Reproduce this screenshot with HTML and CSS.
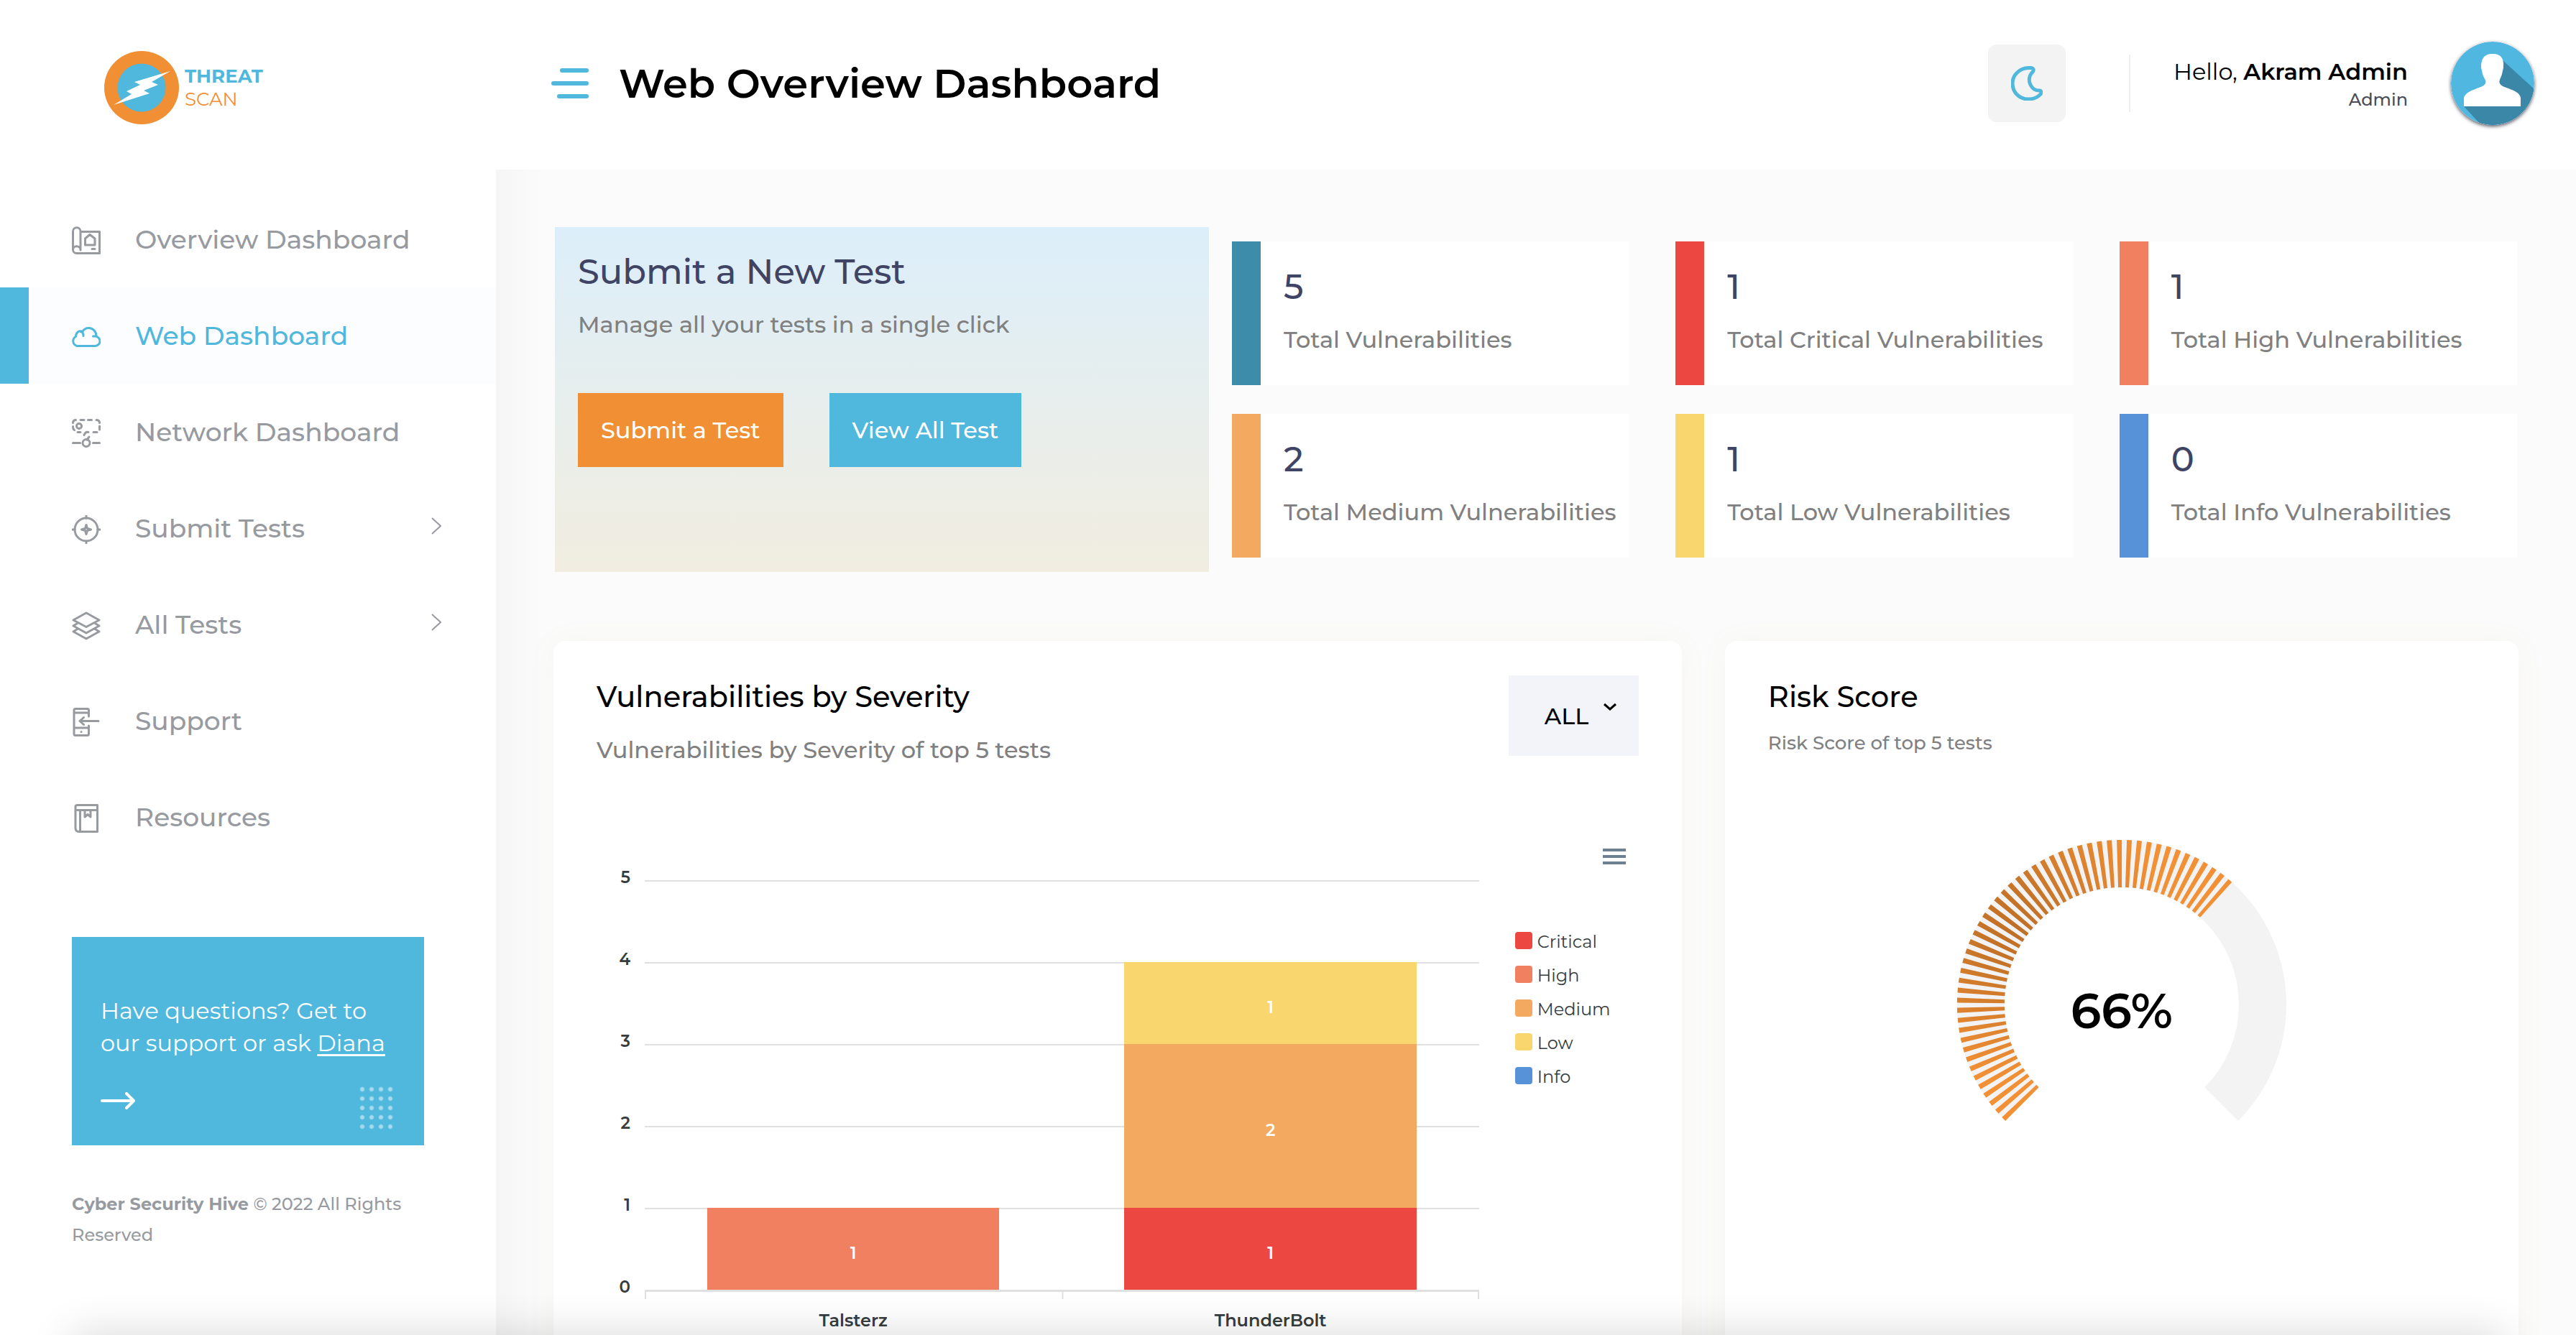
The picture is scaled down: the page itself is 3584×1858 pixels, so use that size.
FILE: index.html
```html
<!DOCTYPE html>
<html lang="en">
<head>
<meta charset="utf-8">
<meta name="viewport" content="width=device-width, initial-scale=1">
<title>Web Overview Dashboard</title>
<link rel="stylesheet" href="styles.css">
</head>
<body>
<div class="app">
  <aside class="sidebar">
    <a class="logo" href="#">
      <svg class="logo-mark" viewBox="0 0 104 102" aria-hidden="true">
        <ellipse cx="52" cy="51" rx="52" ry="51" fill="#f18f34"/>
        <circle cx="52" cy="51" r="33.5" fill="#50b7dd"/>
        <path d="M92 28 42 43l8 4-19 9 7 4-25 15 50-16-8-4 20-8-9-4z" fill="#fff"/>
      </svg>
      <span class="logo-text"><b>THREAT</b><span>SCAN</span></span>
    </a>

    <nav class="nav">
      <a class="nav-item" href="#">
        <svg class="icon" viewBox="0 0 40 40"><path d="M12 7.500H38.500V37.500H6.500a5 5 0 0 1-5-5V7a5 5 0 0 1 10.500 0V33M1.500 32.500c0-6.500 10-6.500 10.500 0M18.500 26V17l6.500-5.500 7 5.500v9zM28 31.500h4"/></svg>
        <span>Overview Dashboard</span>
      </a>
      <a class="nav-item active" href="#" aria-current="page">
        <svg class="icon" viewBox="0 0 40 40"><path d="M8 32.500H32a6.500 6.500 0 0 0 .5-13.500h-3 4.500C34 12 29 7.500 23.500 7.500c-4 0-7 2-8.500 5-5-2-9.500 1-9.500 7C.5 22 0 30 7 32.500M12 12.500c3 .5 4 3 4 6"/></svg>
        <span>Web Dashboard</span>
      </a>
      <a class="nav-item" href="#">
        <svg class="icon" viewBox="0 0 40 40"><path d="M1.500 5.500q0-4 4-4M12 1.500h5M22.500 1.500h5M34 1.500q4.500 0 4.500 4M38.500 10v5M30 18.500h5M1.500 10.500q0 4 2 5M8 18.500h4M23 18.500q-4-1-6 4M24 25l-3 4M1.500 33.500h10M29.500 33.500h9"/><circle cx="10" cy="10" r="3.500"/><circle cx="20" cy="33.500" r="5"/></svg>
        <span>Network Dashboard</span>
      </a>
      <a class="nav-item" href="#">
        <svg class="icon" viewBox="0 0 40 40"><circle cx="20" cy="20" r="16"/><path d="M20 1v3M20 36v3M1 20h3M36 20h3M20 13.500l1.500 5 5 1.500-5 1.500-1.500 5-1.500-5-5-1.500 5-1.500z"/></svg>
        <span>Submit Tests</span>
        <svg class="chevron" viewBox="0 0 14 24"><path d="M1 1l12 11L1 23"/></svg>
      </a>
      <a class="nav-item" href="#">
        <svg class="icon" viewBox="0 0 40 40"><path d="M20 2l18 10-18 9.500L2 12zM7 17l-5 3 18 10 18-10-5-3M7 25l-5 3 18 10 18-10-5-3"/></svg>
        <span>All Tests</span>
        <svg class="chevron" viewBox="0 0 14 24"><path d="M1 1l12 11L1 23"/></svg>
      </a>
      <a class="nav-item" href="#">
        <svg class="icon" viewBox="0 0 40 40"><path d="M23.500 12V3.500q0-2-2-2H5q-2 0-2 2V36.500q0 2 2 2H21.500q2 0 2-2V25M3 7h20M3 28h20M37 18.500H11M16.500 13.500l-5.500 5 5.500 5M13 33.500h.1"/></svg>
        <span>Support</span>
      </a>
      <a class="nav-item" href="#">
        <svg class="icon" viewBox="0 0 40 40"><path d="M7 1.500H35.500V38.500H10q-5 0-5-5V4q0-2.500 2.500-2.500M5 8.500H35M11.500 9V38M18 9v9l4-3.500 4 3.500V9"/></svg>
        <span>Resources</span>
      </a>
    </nav>

    <div class="help">
      <p>Have questions? Get to our support or ask <a href="#">Diana</a></p>
      <div class="help-foot">
        <svg class="arrow" viewBox="0 0 48 24" aria-hidden="true"><path d="M2 12H46M36 2l10 10-10 10"/></svg>
        <span class="dots"></span>
      </div>
    </div>
    <p class="copyright"><strong>Cyber Security Hive</strong> © 2022 All Rights Reserved</p>
  </aside>

  <header class="header">
    <button class="menu-btn" type="button" aria-label="Toggle menu"><i></i><i></i><i></i></button>
    <h1>Web Overview Dashboard</h1>
    <button class="theme-btn" type="button" aria-label="Dark mode">
      <svg viewBox="0 0 44 48"><path d="M28 2.500C31 3 32 5 30.500 7.500 25 13 24 20 27 26c3 6 8 8.500 13 8 2 .5 2.500 2.500 1.500 4.500C37 44 31 46 24 46 11 46 2 36 2 24S12 3 24 2.500z"/></svg>
    </button>
    <div class="user">
      <div class="user-text">
        <span class="hello">Hello, <strong>Akram Admin</strong></span>
        <span class="role">Admin</span>
      </div>
      <svg class="avatar" viewBox="0 0 116 116" aria-label="Profile picture">
        <defs><clipPath id="disc"><circle cx="58" cy="58" r="58"/></clipPath></defs>
        <g clip-path="url(#disc)">
          <path d="M0 0H116V116H0z" fill="#50b7e0"/>
          <path d="M72 26L116 66V116H42L18 90H50V50z" fill="#3b87a8"/>
          <path d="M18 90V78c2-7 11-10 18-13 6-2 11-4 12-7 2-4-3-8-4-13l-2-9c0-11 3-19 16-19s16 8 15 19l-2 9c-1 5-5 9-3 13 1 3 6 5 12 7 7 3 16 6 17 13V90z" fill="#fff"/>
        </g>
      </svg>
    </div>
  </header>

  <main class="main">
    <section class="overview">
      <div class="submit">
        <h2>Submit a New Test</h2>
        <p>Manage all your tests in a single click</p>
        <div class="submit-actions">
          <button class="btn orange" type="button">Submit a Test</button>
          <button class="btn blue" type="button">View All Test</button>
        </div>
      </div>
      <div class="stats">
        <div class="stat total"><b>5</b><span>Total Vulnerabilities</span></div>
        <div class="stat critical"><b>1</b><span>Total Critical Vulnerabilities</span></div>
        <div class="stat high"><b>1</b><span>Total High Vulnerabilities</span></div>
        <div class="stat medium"><b>2</b><span>Total Medium Vulnerabilities</span></div>
        <div class="stat low"><b>1</b><span>Total Low Vulnerabilities</span></div>
        <div class="stat info"><b>0</b><span>Total Info Vulnerabilities</span></div>
      </div>
    </section>

    <section class="panels">
      <article class="card severity">
        <div class="card-head">
          <div>
            <h3>Vulnerabilities by Severity</h3>
            <p class="sub">Vulnerabilities by Severity of top 5 tests</p>
          </div>
          <div class="select">
            <select aria-label="Filter tests"><option>ALL</option></select>
            <svg viewBox="0 0 20 12" aria-hidden="true"><path d="M2 2l8 7 8-7"/></svg>
          </div>
        </div>
        <div class="chart-tools">
          <button class="chart-menu" type="button" aria-label="Chart menu"><i></i><i></i><i></i></button>
        </div>
        <div class="chart">
          <div class="y-axis"><span>5</span><span>4</span><span>3</span><span>2</span><span>1</span><span>0</span></div>
          <div class="plot">
            <div class="bars">
              <div class="bar"><span class="high" style="--n:1">1</span></div>
              <div class="bar"><span class="low" style="--n:1">1</span><span class="medium" style="--n:2">2</span><span class="critical" style="--n:1">1</span></div>
            </div>
            <div class="x-axis"><span>Talsterz</span><span>ThunderBolt</span></div>
          </div>
          <ul class="legend">
            <li class="critical">Critical</li>
            <li class="high">High</li>
            <li class="medium">Medium</li>
            <li class="low">Low</li>
            <li class="info">Info</li>
          </ul>
        </div>
      </article>

      <article class="card risk">
        <h3>Risk Score</h3>
        <p class="sub small">Risk Score of top 5 tests</p>
        <div class="gauge">
          <svg viewBox="-230 -230 460 394" aria-hidden="true">
            <defs>
              <radialGradient id="heat" gradientUnits="userSpaceOnUse" cx="-147" cy="-103" r="210">
                <stop offset="0" stop-color="#bf6f26"/>
                <stop offset=".25" stop-color="#c67428"/>
                <stop offset="1" stop-color="#f29035"/>
              </radialGradient>
            </defs>
            <path d="M-138.600 138.600A196 196 0 1 1 138.600 138.600" fill="none" stroke="#f3f3f4" stroke-width="66"/>
            <path d="M-138.600 138.600A196 196 0 0 1 131.100 -145.700" fill="none" stroke="url(#heat)" stroke-width="66" stroke-dasharray="6 6"/>
          </svg>
          <strong>66%</strong>
        </div>
      </article>
    </section>
  </main>
</div>
<div class="edge-shade"></div>
</body>
</html>
```

FILE: styles.css
```css
:root {
  --blue: #50b7dd;
  --orange: #f18f34;
  --total: #3d8caa;
  --critical: #ec4841;
  --high: #f0805f;
  --medium: #f3aa60;
  --low: #f9d66e;
  --info: #5791d8;
  --grey: #979a9f;
  --muted: #808080;
  --navy: #3f4465;
  --step: 114px;
}

* { box-sizing: border-box; margin: 0; padding: 0; }

body {
  font-family: Montserrat, Inter, "Open Sans", sans-serif;
  font-weight: 500;
  color: #000;
  background: #fbfbfb;
}

button, select { font: inherit; border: 0; cursor: pointer; }
a { color: inherit; text-decoration: none; }

.app {
  display: grid;
  grid-template-columns: 690px 1fr;
  grid-template-rows: 236px 1fr;
  height: 100vh;
  overflow: hidden;
}

/* Sidebar */
.sidebar {
  grid-row: 1 / 3;
  z-index: 1;
  background: #fff;
  box-shadow: 0 0 80px rgba(0, 0, 0, .05);
}

.logo {
  display: flex;
  align-items: center;
  gap: 8px;
  height: 266px;
  padding: 0 0 22px 145px;
}
.logo-mark { width: 104px; height: 102px; }
.logo-text {
  display: flex;
  flex-direction: column;
  font-size: 26px;
  line-height: 32px;
  color: var(--blue);
}
.logo-text span { color: var(--orange); font-weight: 400; }

.nav-item {
  display: flex;
  align-items: center;
  height: 134px;
  padding: 0 76px 0 60px;
  border-left: 40px solid transparent;
  color: var(--grey);
  font-size: 36px;
}
.nav-item.active { border-color: var(--blue); background: #fcfdfe; color: var(--blue); }

.icon {
  width: 40px;
  height: 40px;
  margin: 4px 48px 0 0;
  fill: none;
  stroke: currentColor;
  stroke-width: 3;
  stroke-linecap: round;
  stroke-linejoin: round;
}
.chevron {
  width: 14px;
  height: 24px;
  margin: 0 0 6px auto;
  fill: none;
  stroke: currentColor;
  stroke-width: 2;
}

.help {
  width: 490px;
  margin: 100px 0 0 100px;
  padding: 80px 40px 22px;
  background: var(--blue);
  color: #fff;
  font-weight: 400;
  font-size: 32px;
  line-height: 45px;
}
.help a { text-decoration: underline; text-underline-offset: 4px; text-decoration-thickness: 3px; }
.help-foot { display: flex; justify-content: space-between; align-items: flex-start; margin-top: 38px; }
.arrow {
  width: 48px;
  height: 24px;
  margin-top: 8px;
  fill: none;
  stroke: #fff;
  stroke-width: 4;
  stroke-linecap: round;
  stroke-linejoin: round;
}
.dots {
  width: 52px;
  height: 65px;
  margin: 0 -2px -5px 0;
  background: radial-gradient(circle at 4px 4px, #a8dbee 2px, transparent 4px) 0 0 / 13px 13px;
}
.copyright {
  width: 490px;
  margin: 60px 0 0 100px;
  color: var(--grey);
  font-size: 24px;
  line-height: 43px;
}

/* Header */
.header {
  z-index: 2;
  display: flex;
  align-items: center;
  padding: 0 58px 4px 77px;
  background: #fff;
}
.menu-btn {
  display: flex;
  flex-direction: column;
  align-items: flex-end;
  gap: 12px;
  width: 52px;
  margin-right: 42px;
  background: none;
}
.menu-btn i { width: 100%; height: 6px; border-radius: 3px; background: var(--blue); }
.menu-btn i:first-child { width: 40px; }
.menu-btn i:last-child { width: 44px; }
h1 { font-size: 56px; font-weight: 600; }

.theme-btn {
  display: grid;
  place-items: center;
  width: 108px;
  height: 108px;
  margin-left: auto;
  border-radius: 12px;
  background: #f3f3f3;
}
.theme-btn svg { width: 44px; height: 48px; fill: none; stroke: var(--blue); stroke-width: 5; }
.user { display: flex; align-items: center; margin-left: 88px; }
.user-text {
  display: flex;
  flex-direction: column;
  align-items: flex-end;
  justify-content: center;
  height: 80px;
  padding: 4px 60px 0;
  border-left: 2px solid #eee;
}
.hello { font-size: 32px; line-height: 42px; font-weight: 400; }
.hello strong { font-weight: 600; }
.role { font-size: 24px; line-height: 36px; color: #4a4d57; }
.avatar { width: 116px; height: 116px; border-radius: 50%; box-shadow: 0 2px 5px rgba(20, 20, 40, .7); }

/* Main */
.main { padding: 80px; }

.overview {
  display: grid;
  grid-template-columns: calc(100% / 3) 1fr;
  gap: 32px;
  align-items: center;
  padding: 0 2px;
}
.submit {
  height: 480px;
  padding: 32px;
  background: linear-gradient(#dceefa, #e7eeed 50%, #f1ede0);
}
.submit h2 { font-size: 48px; line-height: 60px; font-weight: 500; color: var(--navy); }
.submit p { margin-top: 20px; font-size: 32px; line-height: 48px; color: var(--muted); }
.submit-actions { display: flex; gap: 64px; margin-top: 71px; }
.btn { height: 103px; padding: 0 32px; color: #fff; font-size: 32px; }
.btn.orange { background: var(--orange); }
.btn.blue { background: var(--blue); }

.stats { display: grid; grid-template-columns: repeat(3, 1fr); gap: 40px 64px; }
.stat {
  display: flex;
  flex-direction: column;
  height: 200px;
  padding: 33px 0 0 32px;
  border-left: 40px solid var(--c);
  background: #fff;
  white-space: nowrap;
}
.stat b { font-size: 48px; line-height: 60px; font-weight: 500; color: var(--navy); }
.stat span { margin-top: 20px; font-size: 32px; line-height: 48px; color: var(--muted); }

.total { --c: var(--total); }
.critical { --c: var(--critical); }
.high { --c: var(--high); }
.medium { --c: var(--medium); }
.low { --c: var(--low); }
.info { --c: var(--info); }

.panels { display: grid; grid-template-columns: repeat(12, 1fr); gap: 60px; margin-top: 96px; }
.card {
  min-height: 1060px;
  padding: 48px 60px;
  border-radius: 16px;
  background: #fff;
  box-shadow: 0 0 40px rgba(180, 150, 90, .05);
}
.card.severity { grid-column: span 7; }
.card.risk { grid-column: span 5; }
.card h3 { font-size: 40px; line-height: 60px; font-weight: 500; }
.sub { margin-top: 20px; font-size: 32px; line-height: 48px; color: var(--muted); }
.sub.small { margin-top: 10px; font-size: 26px; }

.card-head { display: flex; justify-content: space-between; }
.select { position: relative; width: 181px; height: 112px; }
.select select {
  appearance: none;
  width: 100%;
  height: 100%;
  padding: 0 50px;
  background: #f3f4f9;
  color: #000;
  font-size: 32px;
}
.select svg { position: absolute; top: 38px; right: 30px; width: 20px; height: 12px; fill: none; stroke: #000; stroke-width: 3; pointer-events: none; }

.chart-tools { display: flex; justify-content: flex-end; padding: 113px 18px 0 0; }
.chart-menu { display: flex; flex-direction: column; gap: 5px; width: 32px; background: none; }
.chart-menu i { width: 100%; height: 4px; background: #6e8192; }

.chart { display: grid; grid-template-columns: 47px 1fr 222px; padding-left: 20px; margin-top: 22px; }
.y-axis {
  display: flex;
  flex-direction: column;
  margin-top: -20px;
  padding-right: 20px;
  color: #373d3f;
  font-size: 23px;
  font-weight: 600;
  line-height: 32px;
  text-align: right;
}
.y-axis span { height: var(--step); }
.y-axis span:last-child { height: 32px; }
.bars {
  display: grid;
  grid-template-columns: 1fr 1fr;
  height: calc(var(--step) * 5 + 3px);
  border-bottom: 3px solid #e0e0e0;
  background: repeating-linear-gradient(#e0e0e0 0 2px, transparent 2px var(--step));
}
.bar { display: flex; flex-direction: column; justify-content: flex-end; padding: 0 15%; }
.bar span {
  display: grid;
  place-items: center;
  height: calc(var(--step) * var(--n));
  padding-top: 12px;
  background: var(--c);
  color: #fff;
  font-size: 23px;
  font-weight: 600;
}
.x-axis {
  display: grid;
  grid-template-columns: 1fr 1fr;
  padding-top: 20px;
  background:
    linear-gradient(#e0e0e0, #e0e0e0) 100% 0 / 2px 10px no-repeat,
    linear-gradient(90deg, #e0e0e0 2px, transparent 2px) 0 0 / 50% 10px repeat-x;
  color: #373d3f;
  font-size: 24px;
  font-weight: 600;
  line-height: 40px;
  text-align: center;
}
.legend { padding: 62px 0 0 50px; list-style: none; color: #373d3f; font-size: 24px; font-weight: 400; }
.legend li { display: flex; align-items: center; gap: 7px; height: 47px; line-height: 47px; }
.legend li::before { content: ""; width: 24px; height: 24px; margin-bottom: 4px; border-radius: 4px; background: var(--c); }

.gauge { display: grid; place-items: center; margin-top: 110px; }
.gauge > * { grid-area: 1 / 1; }
.gauge svg { width: 460px; height: 394px; }
.gauge strong { padding-top: 84px; font-size: 68px; line-height: 80px; font-weight: 600; }

/* Soft shade along the bottom edge of the window */
.edge-shade {
  position: fixed;
  left: 100px;
  right: 100px;
  bottom: -60px;
  z-index: 3;
  height: 60px;
  box-shadow: 0 0 60px rgba(0, 0, 0, .16);
  pointer-events: none;
}
```
